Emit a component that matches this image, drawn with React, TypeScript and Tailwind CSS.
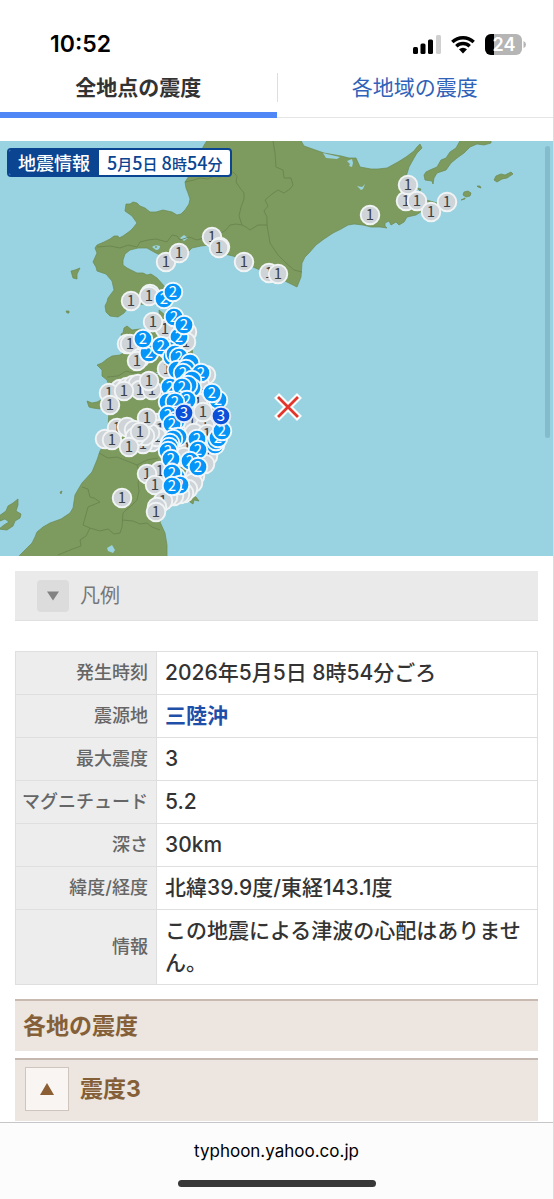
import { useState } from "react";

type Station = [x: number, y: number];

const intensity1: Station[] = [
  [212, 96], [220, 106], [219, 107], [166, 121], [179, 112], [244, 121], [269, 132], [278, 133],
  [406, 60], [408, 44], [417, 60], [447, 61], [431, 71], [370, 74],
  [131, 160], [150, 153], [149, 155],
  [165, 188], [153, 181], [187, 191], [186, 201], [167, 228], [127, 203], [130, 203], [140, 217], [137, 220],
  [120, 248], [127, 246], [133, 244], [138, 243], [140, 249], [152, 249], [149, 240], [109, 252], [124, 250], [110, 264],
  [206, 234], [200, 244], [198, 262], [192, 282], [205, 285], [203, 271], [194, 292], [207, 293],
  [157, 282], [160, 288], [117, 287], [127, 286], [134, 289], [152, 301], [157, 296], [150, 292], [147, 277],
  [143, 303], [145, 295], [135, 296], [140, 291], [105, 298], [112, 299], [129, 306],
  [187, 307], [184, 316], [208, 315], [205, 323], [160, 330], [147, 333], [155, 344],
  [195, 335], [193, 342], [188, 348], [184, 352], [180, 353], [174, 355], [168, 356], [163, 360], [157, 366], [156, 371],
  [122, 357],
];

const intensity2: Station[] = [
  [164, 158], [173, 151], [174, 176], [179, 196], [184, 184], [149, 212], [143, 198], [168, 209], [161, 205],
  [172, 216], [175, 213], [179, 216], [190, 222], [177, 229], [186, 228], [183, 232], [201, 232], [192, 239],
  [170, 246], [192, 247], [188, 244], [182, 246], [218, 259], [212, 252],
  [168, 261], [187, 259], [175, 261], [168, 274], [176, 280], [172, 283],
  [215, 304], [216, 300], [218, 297], [222, 290],
  [178, 296], [173, 298], [170, 302], [169, 306], [168, 310], [171, 318],
  [197, 298], [198, 309], [190, 320], [198, 326], [176, 336], [172, 332], [180, 344], [172, 345],
];

const intensity3: Station[] = [[184, 272], [221, 275]];

// Drawn in this order, so stronger readings lie on top
const markers = [
  ...intensity1.map(([x, y]) => ({ x, y, level: 1, fill: "#cfd4d8", ring: "#f1f4f5", color: "#3c4148" })),
  ...intensity2.map(([x, y]) => ({ x, y, level: 2, fill: "#0595f8", ring: "#f1f8fd", color: "#ffffff" })),
  ...intensity3.map(([x, y]) => ({ x, y, level: 3, fill: "#0a50d8", ring: "#e3ecfb", color: "#ffffff" })),
];

const isCovered = (index: number) =>
  markers.slice(index + 1).some((m) => Math.hypot(m.x - markers[index].x, m.y - markers[index].y) < 8);

const details = [
  { label: "発生時刻", value: "2026年5月5日 8時54分ごろ" },
  { label: "震源地", value: "三陸沖", href: "#epicenter" },
  { label: "最大震度", value: "3" },
  { label: "マグニチュード", value: "5.2" },
  { label: "深さ", value: "30km" },
  { label: "緯度/経度", value: "北緯39.9度/東経143.1度" },
  { label: "情報", value: "この地震による津波の心配はありません。" },
];

function Markers() {
  return (
    <g>
      {markers.map((m, i) => (
        <g key={i}>
          <circle cx={m.x} cy={m.y} r="9.3" fill={m.fill} stroke={m.ring} strokeWidth="1.9" />
          {!isCovered(i) && (
            <text x={m.x} y={m.y + 5} textAnchor="middle" fontSize="15" fill={m.color}>
              {m.level}
            </text>
          )}
        </g>
      ))}
    </g>
  );
}

function IntensityMap() {
  return (
    <svg viewBox="0 0 553 415" className="block h-auto w-full bg-[#99d2e0] font-['Noto_Sans_CJK_JP',sans-serif]" role="img" aria-label="震度分布図">
      <g fill="#7d9b5e" stroke="#6c8a50" strokeWidth="0.7" strokeLinejoin="round">
        {/* Hokkaido */}
        <path d="M208 -2 L203 6 L200 17 L194 28 L189 35 L185 41 L186 47 L188 52 L190 58 L189 63 L185 69 L181 73 L177 74 L172 71 L163 69 L156 71 L150 71 L145 67 L140 65 L137 62 L133 61 L130 63 L126 63 L125 70 L132 75 L137 82 L133 87 L130 90 L123 95 L119 97 L118 95 L114 95 L110 98 L104 101 L97 104 L95 107 L97 112 L93 121 L96 126 L97 130 L106 133 L112 140 L114 149 L108 157 L107 161 L105 165 L106 171 L110 175 L118 176 L124 172 L127 168 L133 164 L145 163 L157 162 L163 156 L165 146 L157 137 L151 133 L147 134 L143 132 L137 132 L127 127 L123 124 L123 119 L125 113 L130 109 L138 107 L147 107 L154 111 L160 114 L167 117 L178 116 L187 112 L192 107 L201 105 L210 104 L220 112 L233 115 L243 119 L253 126 L265 131 L277 136 L287 141 L291 143 L297 146 L299 141 L301 136 L302 122 L305 116 L309 112 L316 104 L324 98 L333 92 L341 88 L348 84 L354 83 L363 84 L371 86 L380 86 L387 87 L385 85 L385 82 L389 80 L391 84 L396 81 L399 84 L404 81 L407 76 L416 74 L424 69 L437 62 L430 60 L417 57 L409 51 L406 36 L409 26 L414 17 L417 12 L422 7 L420 3 L417 6 L414 10 L406 16 L398 21 L387 27 L378 28 L371 28 L360 26 L356 17 L349 17 L341 15 L324 12 L304 5 L300 -2 Z" />
        {/* Honshu */}
        <path d="M121 193 L123 192 L124 187 L127 185 L132 189 L140 188 L153 192 L160 187 L159 169 L165 174 L174 176 L185 175 L190 190 L193 215 L205 230 L215 245 L225 262 L228 280 L224 300 L212 320 L202 335 L195 345 L193 354 L196 356 L199 360 L194 359 L193 363 L190 361 L188 356 L177 359 L165 369 L160 381 L165 392 L167 404 L167 417 L17 417 L24 410 L32 402 L35 396 L37 391 L43 386 L50 382 L61 378 L70 372 L73 367 L75 354 L79 347 L82 342 L92 331 L97 319 L100 310 L105 302 L108 289 L109 267 L104 265 L100 268 L93 267 L89 266 L87 260 L92 262 L97 261 L103 258 L108 249 L109 244 L107 239 L102 235 L102 229 L97 224 L102 222 L107 218 L112 215 L120 214 L126 210 L124 204 Z" />
        {/* Kunashiri, Shikotan and the Habomai islets */}
        <path d="M461 -2 L456 7 L450 11 L446 17 L441 19 L437 26 L430 29 L426 31 L424 34 L425 39 L432 40 L433 43 L434 37 L437 32 L446 29 L451 22 L457 17 L464 12 L470 6 L477 3 L484 4 L491 2 V-2 Z" />
        <path d="M494 39 L496 35 L501 33 L505 34 L511 31 L513 33 L507 37 L502 38 L497 41 Z" />
        <path d="M463 54 L464 51 L468 50 L471 52 L470 55 L466 56 Z M477 45 L480 45 L481 47 L478 46 Z M461 59 L465 57 L465 58 Z M417 47 L421 48 L420 50 Z" />
        <path d="M71 130 L75 129 L80 127 L77 133 L77 138 L73 137 Z M66 170 L69 170 L69 172 L67 172 Z M60 351 L62 350 L61 353 Z" />
        {/* Sado */}
        <path d="M-1 375 L6 370 L8 365 L13 362 L18 358 L18 364 L16 370 L21 373 L20 377 L15 380 L13 385 L7 389 L-1 388 L4 384 L9 381 L5 378 L0 380 Z" />
      </g>
      <g fill="#99d2e0">
        <path d="M152 106 Q155 103 160 105 Q160 109 156 109 Z M180 97 L184 94 L188 97 L184 100 Z M323 12 L331 14 L340 16 L337 18 L326 17 Z M347 20 L352 18 L353 22 L352 26 L349 25 L350 23 Z M357 45 L362 46 L365 43 L363 48 L361 49 L359 47 Z M107 407 L112 404 L115 409 L113 412 L108 410 Z M154 233 L160 229 L161 233 L156 235 Z" />
        <circle cx="156" cy="106" r="1" fill="#7d9b5e" />
      </g>
      {/* Prefecture borders */}
      <g fill="none" stroke="#6a854f" strokeWidth="0.9" strokeLinejoin="round">
        <path d="M185 41 L194 39 L200 37 L208 38 L214 35 L220 36 L226 32 L233 31 L237 35 L236 41 L240 47 L244 52 L244 58 L241 66 L239 75 L242 84 L236 83 L230 84 L226 89 L223 91 L210 95 L197 99 L189 96 L180 99 L177 95 L172 94 L167 101 L156 98 L148 99 L140 101 L137 106 L128 104 L120 107 L110 105 L97 106" />
        <path d="M242 84 L246 86 L250 89 L258 84 L267 84 L267 76 L264 70 L268 65 L265 59 L272 53 L278 49 L284 52 L290 48 L293 44 L291 37 L284 37 L283 29 L276 26 L275 12 L273 0 M267 84 L270 102 L278 114 L286 122 L294 129 L302 131" />
        <path d="M99 312 L108 317 L117 316 L127 320 L137 324 L139 330 L140 336 L138 342 L139 350 L137 359 L131 365 L126 369 L123 372 L122 386 L120 392 L114 393 L108 388 L100 390 L90 387 L83 384 L85 377 L88 366 L100 361 L94 357 L90 356 L88 348 L82 346 M122 379 L133 380 L140 383 L147 382 L152 386 L160 389 M90 387 L86 395 L80 399 L81 405 L70 409 L58 414 M137 324 L147 319 L158 317 M107 236 L118 235 L126 230 L133 232 L143 230 L152 233 L160 232" />
      </g>

      <Markers />

      {/* Epicenter */}
      <g fill="none" strokeLinecap="square">
        <path d="M279 257 L297 275 M297 257 L279 275" stroke="#ffffff" strokeWidth="7" />
        <path d="M279 257 L297 275 M297 257 L279 275" stroke="#e2352c" strokeWidth="2.8" />
      </g>
    </svg>
  );
}

function StatusBar() {
  return (
    <div className="flex h-[69px] items-end justify-between pr-[27px] pb-[10px] pl-[50px] text-black">
      <time className="text-[23px] leading-[30px] font-semibold">10:52</time>
      <div className="flex h-[30px] items-center gap-[10px]">
        <svg width="28" height="19" viewBox="0 0 28 19" aria-hidden="true">
          <rect x="0" y="12" width="5" height="7" rx="1.5" />
          <rect x="7.5" y="8.5" width="5" height="10.5" rx="1.5" />
          <rect x="15" y="4.5" width="5" height="14.5" rx="1.5" />
          <rect x="23" y="0" width="5" height="19" rx="1.5" fill="#d0d0d0" />
        </svg>
        <svg width="24" height="19" viewBox="0 0 24 19" aria-hidden="true">
          <g fill="none" stroke="#000" strokeWidth="3.4">
            <path d="M1.3 7 A15.5 15.5 0 0 1 22.7 7" />
            <path d="M5.3 11.2 A9.7 9.7 0 0 1 18.7 11.2" />
          </g>
          <path d="M8 14.3 A6 6 0 0 1 16 14.3 L12 18.5 Z" />
        </svg>
        <svg width="41" height="21" viewBox="0 0 41 21" aria-hidden="true">
          <clipPath id="battery">
            <rect width="37" height="21" rx="6" />
          </clipPath>
          <g clipPath="url(#battery)">
            <rect width="37" height="21" fill="#b5b5b5" />
            <rect width="9" height="21" />
          </g>
          <path d="M38.5 7 Q41 8 41 10.5 Q41 13 38.5 14 Z" fill="#b5b5b5" />
          <text x="19" y="17" textAnchor="middle" fontSize="18" fontWeight="600" fill="#fff">24</text>
        </svg>
      </div>
    </div>
  );
}

export default function App() {
  const [tab, setTab] = useState("points");
  const [legendOpen, setLegendOpen] = useState(false);
  const [listOpen, setListOpen] = useState(true);

  const tabClass = (active: boolean) =>
    active
      ? "flex-1 border-b-[6px] border-[#4f87f7] pb-[9px] pt-1 text-[21px] leading-[30px] font-bold text-[#333]"
      : "flex-1 border-b border-[#e5e5e5] pb-[14px] pt-1 text-[21px] leading-[30px] text-[#2f62b8]";

  return (
    <div className="flex min-h-screen flex-col border-r border-[#dcdcdc] bg-white font-['Inter','Noto_Sans_CJK_JP',sans-serif] text-[#333]">
      <StatusBar />

      <div role="tablist" className="relative flex">
        <button role="tab" aria-selected={tab === "points"} onClick={() => setTab("points")} className={tabClass(tab === "points")}>
          全地点の震度
        </button>
        <button role="tab" aria-selected={tab === "areas"} onClick={() => setTab("areas")} className={tabClass(tab === "areas")}>
          各地域の震度
        </button>
        <span className="absolute top-1 left-1/2 h-[29px] w-px bg-[#dedede]" />
      </div>

      <div className="relative mt-[23px]">
        <IntensityMap />
        <div className="absolute top-[7px] left-[7px] flex h-[29px] items-stretch overflow-hidden rounded-[4px] border-2 border-[#0b4592] bg-white font-['Noto_Sans_CJK_JP',sans-serif] leading-[25px] font-medium">
          <span className="bg-[#0b4592] px-[9px] text-[18px] text-white">地震情報</span>
          <span className="px-2 text-[18px] text-[#0b4592]">
            5<span className="text-[15px]">月</span>5<span className="text-[15px]">日</span> 8<span className="text-[15px]">時</span>54<span className="text-[15px]">分</span>
          </span>
        </div>
        <div className="absolute top-[5px] right-[3px] h-[292px] w-[5px] rounded-full bg-[#84bccb]" />
      </div>

      <main className="px-[15px] pt-[15px]">
        <button
          aria-expanded={legendOpen}
          onClick={() => setLegendOpen(!legendOpen)}
          className="flex h-[50px] w-full items-center gap-[11px] border-b border-[#e0e0e0] bg-[#eaeaea] px-[22px] text-[20px] text-[#777]"
        >
          <span className="flex size-8 items-center justify-center rounded-[4px] bg-[#dcdcdc]">
            <svg width="12" height="10" viewBox="0 0 12 10" fill="#828282" aria-hidden="true">
              <path d="M0 0.5 H12 L6 9.5 Z" />
            </svg>
          </span>
          凡例
        </button>

        <table className="mt-[30px] w-full border-collapse leading-8">
          <tbody>
            {details.map((row) => (
              <tr key={row.label}>
                <th scope="row" className="w-[141px] border border-[#dfdfdf] bg-[#ededed] py-[5px] pr-2 pl-1 text-right text-[18px] font-medium whitespace-nowrap text-[#666]">
                  {row.label}
                </th>
                <td className="border border-[#dfdfdf] bg-white px-2 py-[5px] text-[21px] font-medium">
                  {row.href ? (
                    <a href={row.href} className="font-bold text-[#1f4fa8]">{row.value}</a>
                  ) : (
                    row.value
                  )}
                </td>
              </tr>
            ))}
          </tbody>
        </table>

        <h2 className="mt-[14px] border-t-2 border-[#c9bab1] bg-[#ede5df] px-2 py-[7px] text-[23px] leading-9 font-bold text-[#845f38]">
          各地の震度
        </h2>

        <div className="mt-[7px] flex items-start gap-[11px] border-t-2 border-[#c3b7af] bg-[#ede5df] px-[10px] pt-[7px] pb-[10px]">
          <button
            aria-label="震度3"
            aria-expanded={listOpen}
            onClick={() => setListOpen(!listOpen)}
            className="flex size-11 items-center justify-center border border-[#cfc5be] bg-[#f8f5f2]"
          >
            <svg width="14" height="12" viewBox="0 0 14 12" fill="#8b5e34" aria-hidden="true">
              <path d="M7 0 L14 12 H0 Z" />
            </svg>
          </button>
          <h3 className="text-[23px] leading-[44px] font-bold text-[#845f38]">震度3</h3>
        </div>
      </main>

      <footer className="mt-auto flex flex-col items-center border-t border-[#c6c6c8] bg-[#fcfcfc] pt-4 pb-3 text-black">
        <p className="text-[17px] leading-6">typhoon.yahoo.co.jp</p>
        <div className="mt-[17px] h-[7px] w-[198px] rounded-full bg-[#383838]" />
      </footer>
    </div>
  );
}
